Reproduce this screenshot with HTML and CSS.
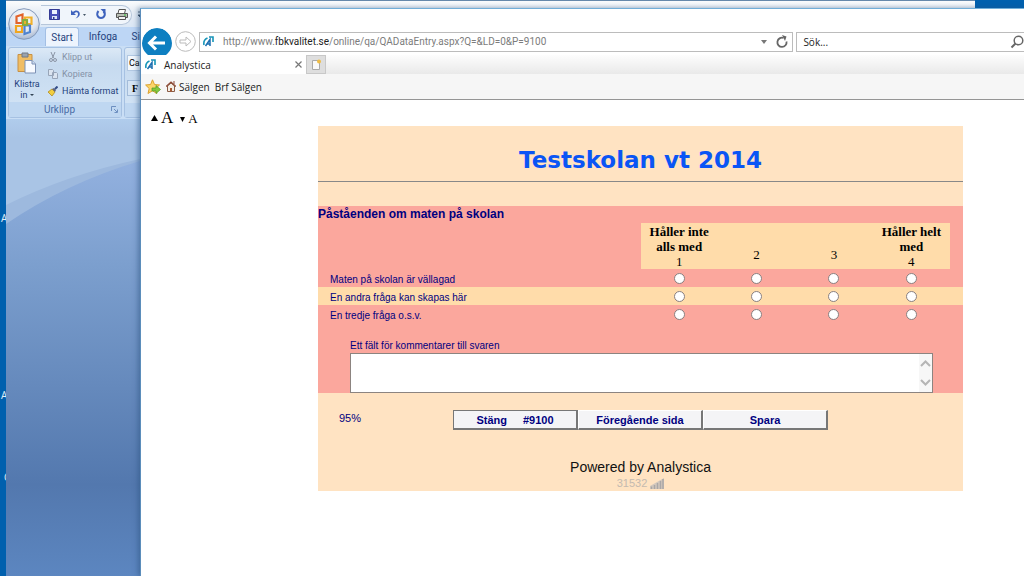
FILE: index.html
```html
<!DOCTYPE html>
<html lang="sv">
<head>
<meta charset="utf-8">
<title>Analystica</title>
<link rel="stylesheet" href="styles.css">
</head>
<body class="desktop">
<span class="desk-label desk-label-a">A</span>
<span class="desk-label desk-label-b">A</span>
<span class="desk-label desk-label-c">C</span>

<section class="word" aria-label="Word">
  <header class="word-title">
    <div class="quick">
      <button class="bare" aria-label="Spara dokument"><svg width="11" height="11" viewBox="0 0 11 11"><path d="M.5.5h10v10h-10z" fill="#4a4fb8" stroke="#343a94"/><path d="M3 1h5v4H3z" fill="#eef2ff"/><path d="M3 7h5v3H3z" fill="#dfe6f8"/><path d="M4 8h1.500v2H4z" fill="#343a94"/></svg></button>
      <button class="bare" aria-label="Ångra"><svg width="16" height="11" viewBox="0 0 16 11"><path d="M1 1v5h5L4.200 4.300C6 2.500 8 3 8 5c0 2-1 3-2.500 4.500C9 8.500 10.500 6 9.500 3.500 8.500 1 5 .8 3 3z" fill="#3f63bd"/><path d="M13 5h3l-1.500 2z" fill="#456"/></svg></button>
      <button class="bare" aria-label="Gör om"><svg width="10" height="11" viewBox="0 0 10 11"><path d="M2.500 2C0 5 1.500 9 5 9s5-4 2.500-6.500" fill="none" stroke="#3f63bd" stroke-width="2"/><path d="M4.500 0h5v5z" fill="#3f63bd"/></svg></button>
      <button class="bare" aria-label="Skriv ut"><svg width="12" height="11" viewBox="0 0 12 11"><path d="M3 .5h6.500l-1 4H2z" fill="#fff" stroke="#555"/><path d="M.5 4.500h11v4H.5z" fill="#b9bfb5" stroke="#555"/><path d="M2.500 7.500h7v3h-7z" fill="#f4f4f4" stroke="#555"/><path d="M8 5.500h2v1H8z" fill="#3b3"/></svg></button>
    </div>
    <button class="bare" aria-label="Anpassa"><svg width="6" height="8" viewBox="0 0 6 8"><path d="M0 1h6M0 4h6L3 7z" fill="#345" stroke="#345" stroke-width=".8"/></svg></button>
  </header>
  <nav class="word-tabs">
    <button class="word-tab word-tab-on">Start</button>
    <button class="word-tab">Infoga</button>
    <button class="word-tab">Sidlayout</button>
  </nav>
  <div class="ribbon">
    <div class="group group-clip">
      <div class="group-body">
        <button class="paste"><svg width="20" height="22" viewBox="0 0 20 22"><path d="M1 2.500h14v17H1z" fill="#f0bd63" stroke="#c89144"/><path d="M5 1h6v4H5z" fill="#9aa3ae" stroke="#717984"/><path d="M8 8.500h7l3.500 3.500v9H8z" fill="#f7faff" stroke="#7d91b5"/><path d="M15 8.500V12h3.500" fill="#cfdcf0" stroke="#7d91b5"/></svg><span>Klistra<br>in <i class="caret"></i></span></button>
        <div class="clip-list">
          <button class="clip off"><svg width="10" height="10" viewBox="0 0 10 10"><path d="M3 0l2.500 6M7 0L4.500 6" stroke="#8a94a5" fill="none"/><circle cx="3" cy="8" r="1.500" fill="none" stroke="#8a94a5"/><circle cx="7" cy="8" r="1.500" fill="none" stroke="#8a94a5"/></svg>Klipp ut</button>
          <button class="clip off"><svg width="10" height="10" viewBox="0 0 10 10"><path d="M.5.500h4l1 1v5h-5zM4.500 3.500h4l1 1v5h-5z" fill="#dbe4f0" stroke="#98a5b8"/></svg>Kopiera</button>
          <button class="clip"><svg width="10" height="10" viewBox="0 0 10 10"><path d="M0 6l4-3 3 3-3 4z" fill="#f2ce3f" stroke="#a98213" stroke-width=".7"/><path d="M4 3l2-1 2 2-1 2z" fill="#667"/><path d="M7 3l2.500-2.500" stroke="#334d88" stroke-width="2"/></svg>Hämta format</button>
        </div>
      </div>
      <div class="group-name">Urklipp<svg class="launcher" width="7" height="7" viewBox="0 0 7 7"><path d="M.5 5V.5H5M3 3l3 3M6.500 3.500v3h-3" fill="none" stroke="#6d8fc0"/></svg></div>
    </div>
    <div class="group group-font">
      <div class="font-body"><input class="font-name" aria-label="Teckensnitt" value="Calibri"><button class="bold">F</button></div>
      <div class="group-name"></div>
    </div>
  </div>
  <svg class="word-canvas" viewBox="0 0 969 457" preserveAspectRatio="none" aria-hidden="true">
    <defs>
      <linearGradient id="deep" x1="0" y1="0" x2="0" y2="1"><stop offset=".08" stop-color="#94b2e0"/><stop offset=".32" stop-color="#7c9fce"/><stop offset=".8" stop-color="#5378ae"/><stop offset="1" stop-color="#5c86c0"/></linearGradient>
      <linearGradient id="sky" x1="0" y1="0" x2="0" y2="1"><stop offset="0" stop-color="#b2ceee"/><stop offset=".25" stop-color="#a9c4e5"/></linearGradient>
    </defs>
    <path d="M0 0h969v457H0z" fill="url(#deep)"/>
    <path d="M0 0h969v10Q400-25 134 42 60 64 0 105z" fill="#9db9de"/>
    <path d="M0 0h969v10Q400-30 134 40 60 56 0 86z" fill="url(#sky)"/>
  </svg>
  <button class="orb" aria-label="Office-knappen"><svg width="32" height="32" viewBox="0 0 32 32"><defs><radialGradient id="orb" cx=".5" cy=".3" r=".7"><stop offset="0" stop-color="#fff"/><stop offset=".65" stop-color="#dfe5ef"/><stop offset="1" stop-color="#a7b7cf"/></radialGradient></defs><circle cx="16" cy="16" r="15.300" fill="url(#orb)" stroke="#8399ba"/><g fill="none" stroke-width="2.200"><path d="M14 15H8.500V8.500l6-2V15" stroke="#e2632a"/><path d="M17 9.500h6.500V16H17z" stroke="#f2b12c"/><path d="M8 18h6v6H8z" stroke="#f0a61f"/><path d="M16.500 17.500h5.500v6.500l-5.500 2z" stroke="#4f83cf"/><path d="M15 12h4v5h-4z" stroke="#85ad3e"/></g></svg></button>
</section>

<main class="browser">
  <header class="nav">
    <button class="back" aria-label="Bakåt"><svg width="30" height="30" viewBox="0 0 30 30"><circle cx="15" cy="15" r="15" fill="#0e7fc1"/><path d="M23 15H8M14 8.500L7.500 15l6.500 6.500" fill="none" stroke="#fff" stroke-width="3"/></svg></button>
    <button class="bare" aria-label="Framåt"><svg width="21" height="21" viewBox="0 0 21 21"><circle cx="10.500" cy="10.500" r="9.800" fill="#fff" stroke="#bbb"/><path d="M5 9h6V6l5 4.500-5 4.500v-3H5z" fill="#fff" stroke="#bbb"/></svg></button>
    <div class="address">
      <svg class="mark" width="11" height="11" viewBox="0 0 11 11"><path d="M4.500 2Q0 4 1 9M6 1h4v5" fill="none" stroke="#1695b8" stroke-width="1.600"/><path d="M2.500 10L7 3.500V10M4 8h3" fill="none" stroke="#1c6fb0" stroke-width="1.500"/></svg>
      <span class="url">http://www.<b>fbkvalitet.se</b>/online/qa/QADataEntry.aspx?Q=&amp;LD=0&amp;P=9100</span>
      <button class="bare" aria-label="Visa adresser"><svg width="6" height="4" viewBox="0 0 6 4"><path d="M0 0h6L3 4z" fill="#777"/></svg></button>
      <button class="bare" aria-label="Uppdatera"><svg width="12" height="13" viewBox="0 0 12 13"><path d="M10.500 6.500A4.600 4.600 0 1 1 7.500 3" fill="none" stroke="#666" stroke-width="1.800"/><path d="M6 0l4.500 1.500L9 6z" fill="#666"/></svg></button>
    </div>
    <div class="search">
      <input class="search-input" aria-label="Sök" placeholder="Sök...">
      <button class="bare" aria-label="Starta sökning"><svg width="14" height="14" viewBox="0 0 14 14"><circle cx="8.500" cy="5.500" r="4.300" fill="none" stroke="#666" stroke-width="1.500"/><path d="M5.500 8.500L1.500 12.500" stroke="#666" stroke-width="2"/></svg></button>
    </div>
  </header>
  <div class="tabs">
    <div class="tab">
      <svg class="mark" width="11" height="11" viewBox="0 0 11 11"><path d="M4.500 2Q0 4 1 9M6 1h4v5" fill="none" stroke="#1695b8" stroke-width="1.600"/><path d="M2.500 10L7 3.500V10M4 8h3" fill="none" stroke="#1c6fb0" stroke-width="1.500"/></svg>
      <span class="tab-name">Analystica</span>
      <button class="bare" aria-label="Stäng flik"><svg width="7" height="7" viewBox="0 0 7 7"><path d="M.5.500l6 6M6.500.500l-6 6" stroke="#777" stroke-width="1.200"/></svg></button>
    </div>
    <button class="tab-new" aria-label="Ny flik"><svg width="11" height="12" viewBox="0 0 11 12"><path d="M1.500 1.500h7v9h-7z" fill="#fafafa" stroke="#aaa"/><circle cx="8" cy="2.500" r="2" fill="#f0bd45"/></svg></button>
  </div>
  <nav class="favs">
    <button class="bare" aria-label="Lägg till favorit"><svg width="16" height="16" viewBox="0 0 16 16"><path d="M7.500.8l2 4.700 5 .5-3.800 3.500 1.200 5-4.400-2.700L3 14.500 4.200 9.500.600 6l5-.5z" fill="#fbd568" stroke="#dca12e"/><path d="M7 9h4V6.500l4.500 4-4.500 4V12H7z" fill="#85c83d" stroke="#4f9922" stroke-width=".7"/></svg></button>
    <a class="fav" href="#salgen"><svg width="10" height="11" viewBox="0 0 10 11"><path d="M1.500 5v5.500h7V5L5 2z" fill="#f3ede4" stroke="#8b5b45"/><path d="M0 5.500L5 1l5 4.500" fill="none" stroke="#8c4936" stroke-width="1.300"/><path d="M4 7h2v3.500H4z" fill="#a65b36"/><path d="M7.500 0h1v3h-1z" fill="#8b4937"/></svg>Sälgen</a>
    <a class="fav" href="#brf">Brf Sälgen</a>
  </nav>
  <div class="page">
    <div class="zoomers">
      <button class="zoomer zoomer-up" aria-label="Större text"><svg width="7" height="7" viewBox="0 0 7 7"><path d="M3.500 0L7 6H0z" fill="#000"/></svg>A</button>
      <button class="zoomer" aria-label="Mindre text"><svg width="5" height="5" viewBox="0 0 5 5"><path d="M0 0h5L2.500 5z" fill="#000"/></svg>A</button>
    </div>
    <form class="survey">
      <h1 class="survey-title">Testskolan vt 2014</h1>
      <section class="questions">
        <h2 class="section-title">Påståenden om maten på skolan</h2>
        <table class="grid">
          <thead>
            <tr>
              <td class="col-text"></td>
              <th class="scale">Håller inte alls med<span class="num">1</span></th>
              <th class="scale scale-mid"><span class="num">2</span></th>
              <th class="scale scale-mid"><span class="num">3</span></th>
              <th class="scale">Håller helt med<span class="num">4</span></th>
              <td class="col-end"></td>
            </tr>
          </thead>
          <tbody>
            <tr><th class="question" scope="row">Maten på skolan är vällagad</th>
              <td><input class="radio" type="radio" name="q1" aria-label="Maten 1"></td><td><input class="radio" type="radio" name="q1" aria-label="Maten 2"></td><td><input class="radio" type="radio" name="q1" aria-label="Maten 3"></td><td><input class="radio" type="radio" name="q1" aria-label="Maten 4"></td><td></td></tr>
            <tr class="alt"><th class="question" scope="row">En andra fråga kan skapas här</th>
              <td><input class="radio" type="radio" name="q2" aria-label="Andra 1"></td><td><input class="radio" type="radio" name="q2" aria-label="Andra 2"></td><td><input class="radio" type="radio" name="q2" aria-label="Andra 3"></td><td><input class="radio" type="radio" name="q2" aria-label="Andra 4"></td><td></td></tr>
            <tr><th class="question" scope="row">En tredje fråga o.s.v.</th>
              <td><input class="radio" type="radio" name="q3" aria-label="Tredje 1"></td><td><input class="radio" type="radio" name="q3" aria-label="Tredje 2"></td><td><input class="radio" type="radio" name="q3" aria-label="Tredje 3"></td><td><input class="radio" type="radio" name="q3" aria-label="Tredje 4"></td><td></td></tr>
          </tbody>
        </table>
        <div class="comment">
          <label for="comment">Ett fält för kommentarer till svaren</label>
          <div class="comment-box">
            <textarea id="comment" class="comment-input" rows="2"></textarea>
            <div class="scroll"><svg width="11" height="7" viewBox="0 0 11 7"><path d="M1 6l4.500-4.500L10 6" fill="none" stroke="#b5b5b5" stroke-width="2"/></svg><svg width="11" height="7" viewBox="0 0 11 7"><path d="M1 1l4.500 4.500L10 1" fill="none" stroke="#b5b5b5" stroke-width="2"/></svg></div>
          </div>
        </div>
      </section>
      <footer class="survey-foot">
        <div class="actions">
          <span class="percent">95%</span>
          <div class="buttons">
            <button class="action action-default" type="button"><span>Stäng</span><span>#9100</span></button>
            <button class="action" type="button">Föregående sida</button>
            <button class="action" type="button">Spara</button>
          </div>
        </div>
        <p class="powered">Powered by Analystica</p>
        <p class="counter">31532 <svg width="14" height="11" viewBox="0 0 14 11"><path d="M0 11V8l14-8v11z" fill="#d3c8bd"/><path d="M1.500 11V8.500M4.500 11V7M7.500 11V5M10.500 11V3M13 11V1" stroke="#aaa7a7" stroke-width="1.500"/></svg></p>
      </footer>
    </form>
  </div>
</main>
</body>
</html>
```
FILE: styles.css
```css
* { box-sizing: border-box; }

.desktop {
  position: relative;
  margin: 0;
  min-height: 100vh;
  overflow: hidden;
  background: #0060ae;
  font-family: "Open Sans", "Noto Sans", sans-serif;
  font-size: 10px;
}

button { font: inherit; color: inherit; cursor: pointer; }
svg { display: block; flex: none; }
.bare { padding: 0; border: 0; background: none; }

.desk-label { position: absolute; left: 1px; color: #e3eef8; }
.desk-label-a { top: 211px; }
.desk-label-b { top: 388px; }
.desk-label-c { top: 470px; left: 4px; }

/* Word window */
.word {
  position: absolute;
  top: 0;
  right: 49px;
  bottom: 0;
  left: 6px;
  display: flex;
  flex-direction: column;
  border-top: 1px solid #6688ab;
  background: #c4daf4;
  font-family: Roboto, "Open Sans", sans-serif;
  color: #1e3f7c;
}
.word-title {
  display: flex;
  align-items: center;
  gap: 6px;
  height: 26px;
  padding: 3px 0 2px 35px;
  background: linear-gradient(#fbfcfd, #e8eef5 40%, #dbe7f5);
}
.quick {
  display: flex;
  align-items: center;
  gap: 10px;
  height: 20px;
  padding: 0 3px 0 8px;
  border: 1px solid #b6c6da;
  border-left: 0;
  border-radius: 0 10px 10px 0;
  background: #f0f5fb;
}
.word-tabs { display: flex; height: 19px; padding-left: 39px; background: #bdd6f5; }
.word-tab { width: 34px; margin-right: 7px; padding: 0; border: 0; background: none; font-size: 10px; }
.word-tab-on { background: #edf4fd; border: 1px solid #a3bfe4; border-bottom: 0; border-radius: 3px 3px 0 0; }
.word-tab:last-child { width: 50px; }
.ribbon { display: flex; gap: 2px; height: 73px; padding: 1px 2px; background: #c9def5; }
.group {
  display: flex;
  flex-direction: column;
  border: 1px solid #a6c1e2;
  border-radius: 3px;
  background: linear-gradient(#dce9f6, #c6daef 25%, #d4e5f6);
}
.group-clip { width: 114px; }
.group-font { flex: 1; }
.group-body { display: flex; flex: 1; }
.group-name {
  display: flex;
  justify-content: space-between;
  align-items: center;
  height: 15px;
  padding: 0 3px 0 35px;
  background: #bfd7f1;
  color: #4a6da6;
}
.paste { display: flex; flex-direction: column; align-items: center; gap: 5px; width: 36px; padding: 4px 0 0; border: 0; background: none; font-size: 9px; line-height: 11px; }
.caret { display: inline-block; border: 2px solid transparent; border-top-color: #345; }
.clip-list { display: flex; flex-direction: column; gap: 5px; padding-top: 3px; }
.clip { display: flex; align-items: center; gap: 4px; padding: 0 0 0 3px; border: 0; background: none; font-size: 9px; line-height: 12px; white-space: nowrap; }
.off { color: #8592a7; }
.font-body { display: flex; flex: 1; flex-direction: column; align-items: flex-start; gap: 9px; padding: 7px 2px; }
.font-name { width: 120px; height: 16px; padding: 0 1px; border: 1px solid #b2c8e2; background: #f3f8fd; font: 9px Roboto, sans-serif; }
.bold { width: 24px; height: 16px; padding: 0 4px; border: 1px solid #a3bcda; background: #d5e4f4; color: #000; font: bold 10px "Liberation Serif", serif; text-align: left; }
.word-canvas { flex: 1; width: 100%; min-height: 0; }
.orb { position: absolute; top: 7px; left: 2px; padding: 0; border: 0; background: none; }

/* Browser window */
.browser {
  position: absolute;
  top: 8px;
  right: 0;
  bottom: 0;
  left: 140px;
  display: flex;
  flex-direction: column;
  border-top: 1px solid #71aed9;
  border-left: 1px solid #5b8dbb;
  background: #fff;
  box-shadow: -2px 0 5px #2c538088;
  color: #222;
}
.nav { display: flex; align-items: center; gap: 3px; height: 46px; padding: 19px 0 0 1px; }
.back { height: 27px; padding: 0; border: 0; background: none; overflow: hidden; border-radius: 15px 15px 0 0; }
.back, .nav > .bare { flex: none; }
.address, .search { display: flex; align-items: center; height: 20px; border: 1px solid #bcbcbc; background: #fff; }
.address { flex: 31; gap: 9px; min-width: 0; padding: 0 4px 0 3px; }
.url { flex: 1; color: #7c7c7c; font-family: Roboto, "Open Sans", sans-serif; font-size: 10px; white-space: nowrap; }
.url b { color: #222; font-weight: 400; }
.search { flex: 12; min-width: 0; border-right: 0; }
.search-input { flex: 1; min-width: 0; padding: 0 6px; border: 0; background: none; font: 10px "Open Sans", sans-serif; }
.search-input::placeholder { color: #222; opacity: 1; }
.tabs { display: flex; height: 19px; background: linear-gradient(#fdfdfd, #e9e9e9); }
.tab { display: flex; align-items: center; gap: 8px; width: 165px; padding: 0 4px; background: #fff; }
.tab-name { flex: 1; }
.tab-new { display: flex; justify-content: center; align-items: center; width: 20px; padding: 0; border: 1px solid #c8c8c8; background: #dedede; }
.favs { display: flex; align-items: center; gap: 5px; height: 26px; padding-left: 4px; border-bottom: 1px solid #959595; background: #f6f6f6; }
.fav { display: flex; align-items: center; gap: 3px; color: #222; text-decoration: none; }

.page { display: flex; align-items: flex-start; flex: 1; padding-top: 8px; font-family: "Liberation Sans", Arial, sans-serif; }
.zoomers { display: flex; align-items: baseline; gap: 7px; width: 177px; padding-left: 10px; font-family: "Liberation Serif", serif; }
.zoomer { display: flex; align-items: center; gap: 3px; padding: 0; border: 0; background: none; color: #000; font-size: 13px; }
.zoomer-up { font-size: 17px; }

/* Survey */
.survey { flex: 1; margin: 18px 61px 0 0; background: #ffe3c2; color: #000080; }
.survey-title {
  margin: 0 0 24px;
  padding: 18px 0 5px;
  border-bottom: 1px solid #888;
  color: #0a55f5;
  font: bold 23px/32px "DejaVu Sans", "Liberation Sans", sans-serif;
  text-align: center;
}
.questions { background: #fba79d; }
.section-title { margin: 0; font-size: 12px; line-height: 17px; }
.grid { width: 100%; border-collapse: collapse; table-layout: fixed; }
.grid td, .grid th { padding: 0; text-align: center; }
.col-text { width: 50%; }
.scale { width: 12%; height: 46px; background: #ffdcaa; color: #000; font: bold 13px/15px "Liberation Serif", "Times New Roman", serif; vertical-align: bottom; }
.grid .scale { padding: 0 4px; }
.grid .scale-mid { padding-bottom: 7px; }
.num { display: block; font-weight: 400; }
.alt { background: #ffdcaa; }
.grid .question { height: 18px; padding: 3px 0 0 12px; font-size: 10px; font-weight: 400; line-height: 15px; text-align: left; }
.radio { display: block; width: 11px; height: 11px; margin: 0 auto; appearance: none; border: 1px solid #8a8080; border-radius: 50%; background: #fff; }
.radio:checked { background: radial-gradient(#222 35%, #fff 40%); }
.comment { padding: 16px 30px 0 32px; font-size: 10px; line-height: 14px; }
.comment label { display: block; }
.comment-box { display: flex; height: 40px; border: 1px solid #8c8480; background: #fff; }
.comment-input { flex: 1; padding: 2px; border: 0; resize: none; font: 12px "Liberation Sans", sans-serif; }
.scroll { display: flex; flex-direction: column; justify-content: space-between; padding: 6px 1px; background: #f7f7f7; }
.survey-foot { padding: 17px 0 0; }
.actions { display: grid; grid-template-columns: 1fr auto 1fr; }
.percent { padding-left: 21px; font-size: 11px; line-height: 17px; }
.buttons { display: flex; }
.action { width: 125px; height: 20px; padding: 0; border: 1px solid #fff; border-right: 2px solid #777; border-bottom: 2px solid #777; background: #f4f4f6; color: #000080; font-size: 11px; font-weight: 700; }
.action-default { display: flex; justify-content: center; align-items: center; gap: 16px; border-top-color: #777; border-left-color: #777; }
.powered { margin: 28px 0 0; color: #111; font-size: 14px; line-height: 18px; text-align: center; }
.counter { display: flex; justify-content: center; align-items: center; gap: 3px; margin: 0; color: #c4bab0; font-size: 11px; line-height: 15px; }
```
